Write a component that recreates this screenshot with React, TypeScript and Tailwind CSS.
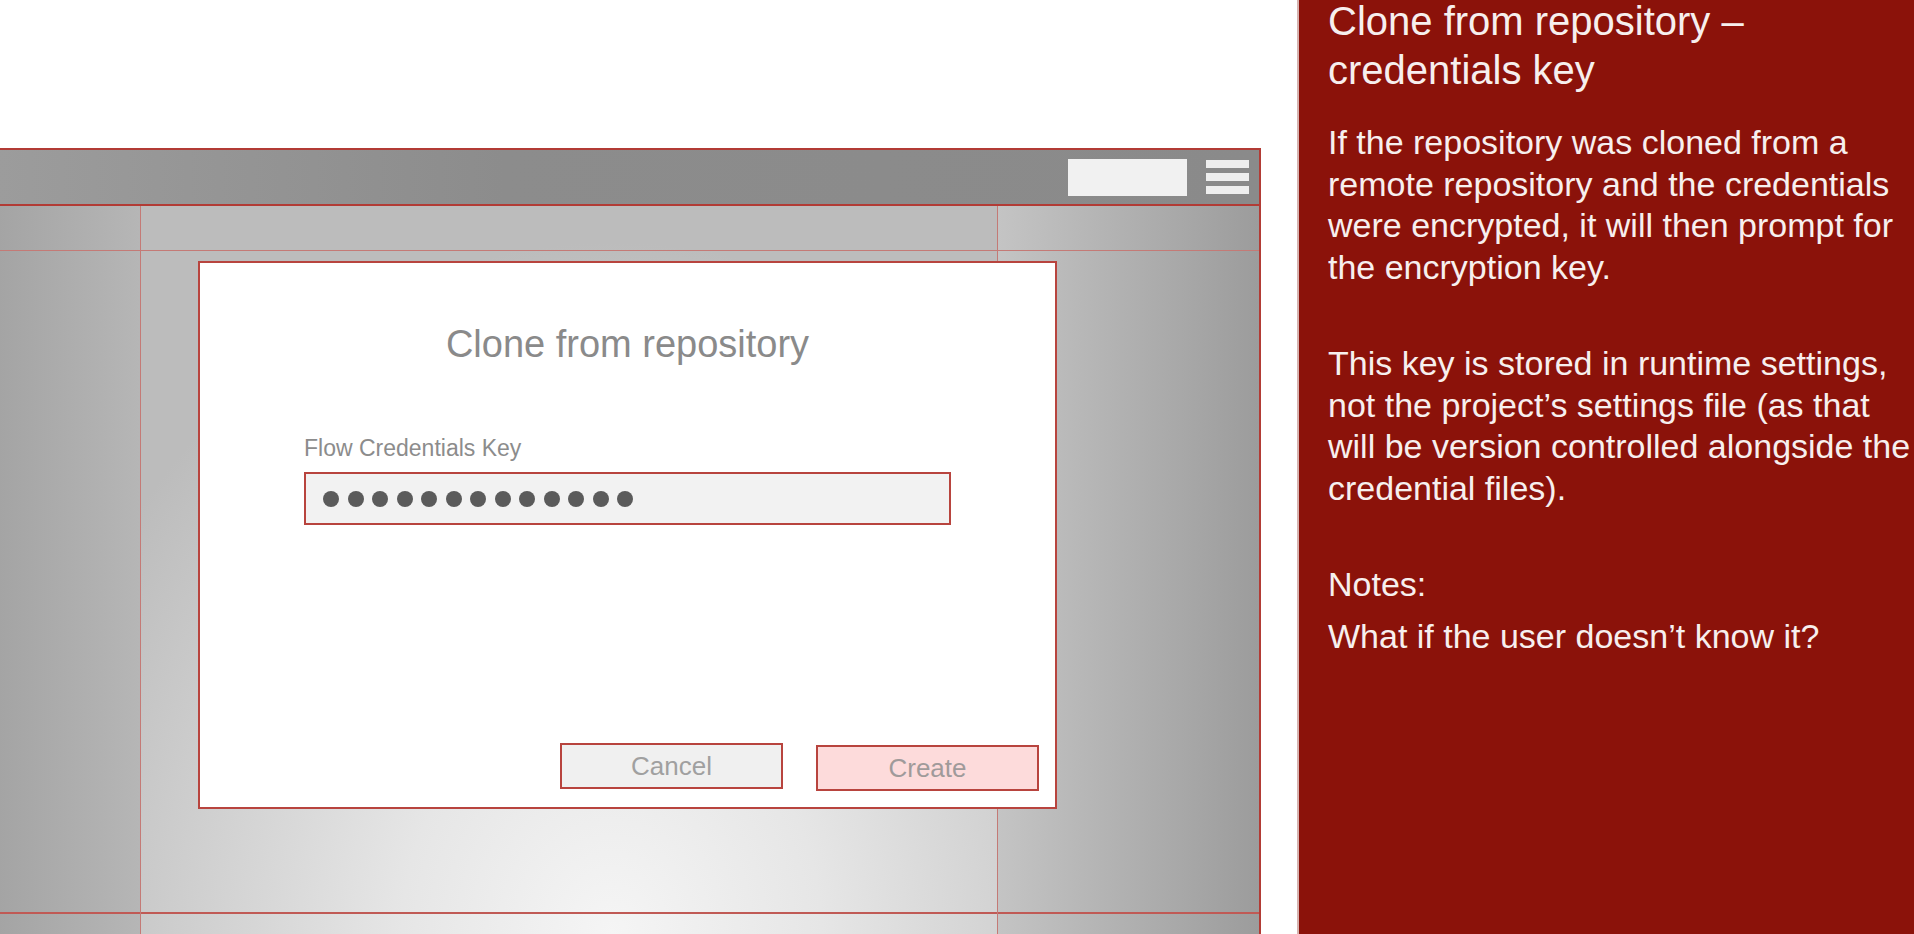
const DOTS = Array.from({ length: 13 });

function Column({ className, last }: { className: string; last?: boolean }) {
  return (
    <div className={`flex flex-col ${last ? 'flex-1' : 'border-r border-[#c47a76]'} ${className}`}>
      <div className="h-[45px] border-b border-[#c47a76]" />
      <div className="h-[663px] border-b-2 border-[#c05a55]" />
      <div className="flex-1" />
    </div>
  );
}

function Dialog() {
  return (
    <div className="absolute left-[199px] top-[55px] flex h-[548px] w-[859px] flex-col border-2 border-[#b8443e] bg-white">
      <h2 className="mt-[59px] text-center text-[38px] leading-[44px] text-[#8a8a8a]">
        Clone from repository
      </h2>
      <div className="ml-[104px] mt-[69px] w-[647px]">
        <label className="block text-[23px] leading-[26px] text-[#8c8c8c]">
          Flow Credentials Key
        </label>
        <div className="mt-[11px] flex h-[53px] items-center gap-[8.5px] border-2 border-[#b8443e] bg-[#f2f2f2] pl-[17px]">
          {DOTS.map((_, i) => (
            <span key={i} className="h-[16px] w-[16px] rounded-full bg-[#5b5b5b]" />
          ))}
        </div>
      </div>
      <div className="mt-auto mb-[16px] mr-[16px] flex items-end justify-end gap-[33px]">
        <button className="mb-[2px] h-[46px] w-[223px] border-2 border-[#b8443e] bg-[#f0f0f0] text-[26px] text-[#a0a0a0]">
          Cancel
        </button>
        <button className="h-[46px] w-[223px] border-2 border-[#b8443e] bg-[#fddbdb] text-[26px] text-[#a09a9a]">
          Create
        </button>
      </div>
    </div>
  );
}

export default function App() {
  return (
    <div className="flex h-[934px] w-[1914px] overflow-hidden bg-white font-['Liberation_Sans',Arial,sans-serif]">
      {/* Mockup window */}
      <div className="flex w-[1297px] shrink-0 flex-col pt-[148px]">
        <div className="ml-[-3px] flex w-[1264px] flex-1 flex-col border-2 border-b-0 border-[#b23b35]">
          <div className="flex h-[56px] items-center justify-end gap-[19px] border-b-2 border-[#b23b35] bg-[linear-gradient(to_right,#9c9c9c,#8c8c8c_40%,#8a8a8a)] pr-[10px]">
            <div className="h-[37px] w-[119px] bg-[#f1f1f1]" />
            <div className="flex w-[43px] flex-col gap-[5px]">
              <span className="h-[8px] bg-[#eeeeee]" />
              <span className="h-[8px] bg-[#eeeeee]" />
              <span className="h-[8px] bg-[#eeeeee]" />
            </div>
          </div>
          <div className="relative flex flex-1">
            <Column className="w-[142px] bg-[linear-gradient(to_right,#a4a4a4,#b6b6b6)]" />
            <Column className="w-[857px] bg-[radial-gradient(ellipse_70%_95%_at_55%_100%,#f5f5f5_0%,#e6e6e6_35%,#bcbcbc_100%)]" />
            <Column last className="bg-[linear-gradient(to_right,#c4c4c4,#b0b0b0_50%,#9c9c9c)]" />
            <Dialog />
          </div>
        </div>
      </div>

      {/* Notes panel */}
      <aside className="flex-1 border-l-2 border-[#d6b3b0] bg-[#8b120a] pl-[29px] text-[#f7efee]">
        <h1 className="mt-[-3px] whitespace-nowrap text-[40px] leading-[49px]">
          Clone from repository –<br />
          credentials key
        </h1>
        <div className="mt-[27px] whitespace-nowrap text-[34px] leading-[41.5px]">
          <p>
            If the repository was cloned from a<br />
            remote repository and the credentials<br />
            were encrypted, it will then prompt for<br />
            the encryption key.
          </p>
          <p className="mt-[55px]">
            This key is stored in runtime settings,<br />
            not the project’s settings file (as that<br />
            will be version controlled alongside the<br />
            credential files).
          </p>
          <p className="mt-[55px]">Notes:</p>
          <p className="mt-[10px]">What if the user doesn’t know it?</p>
        </div>
      </aside>
    </div>
  );
}
